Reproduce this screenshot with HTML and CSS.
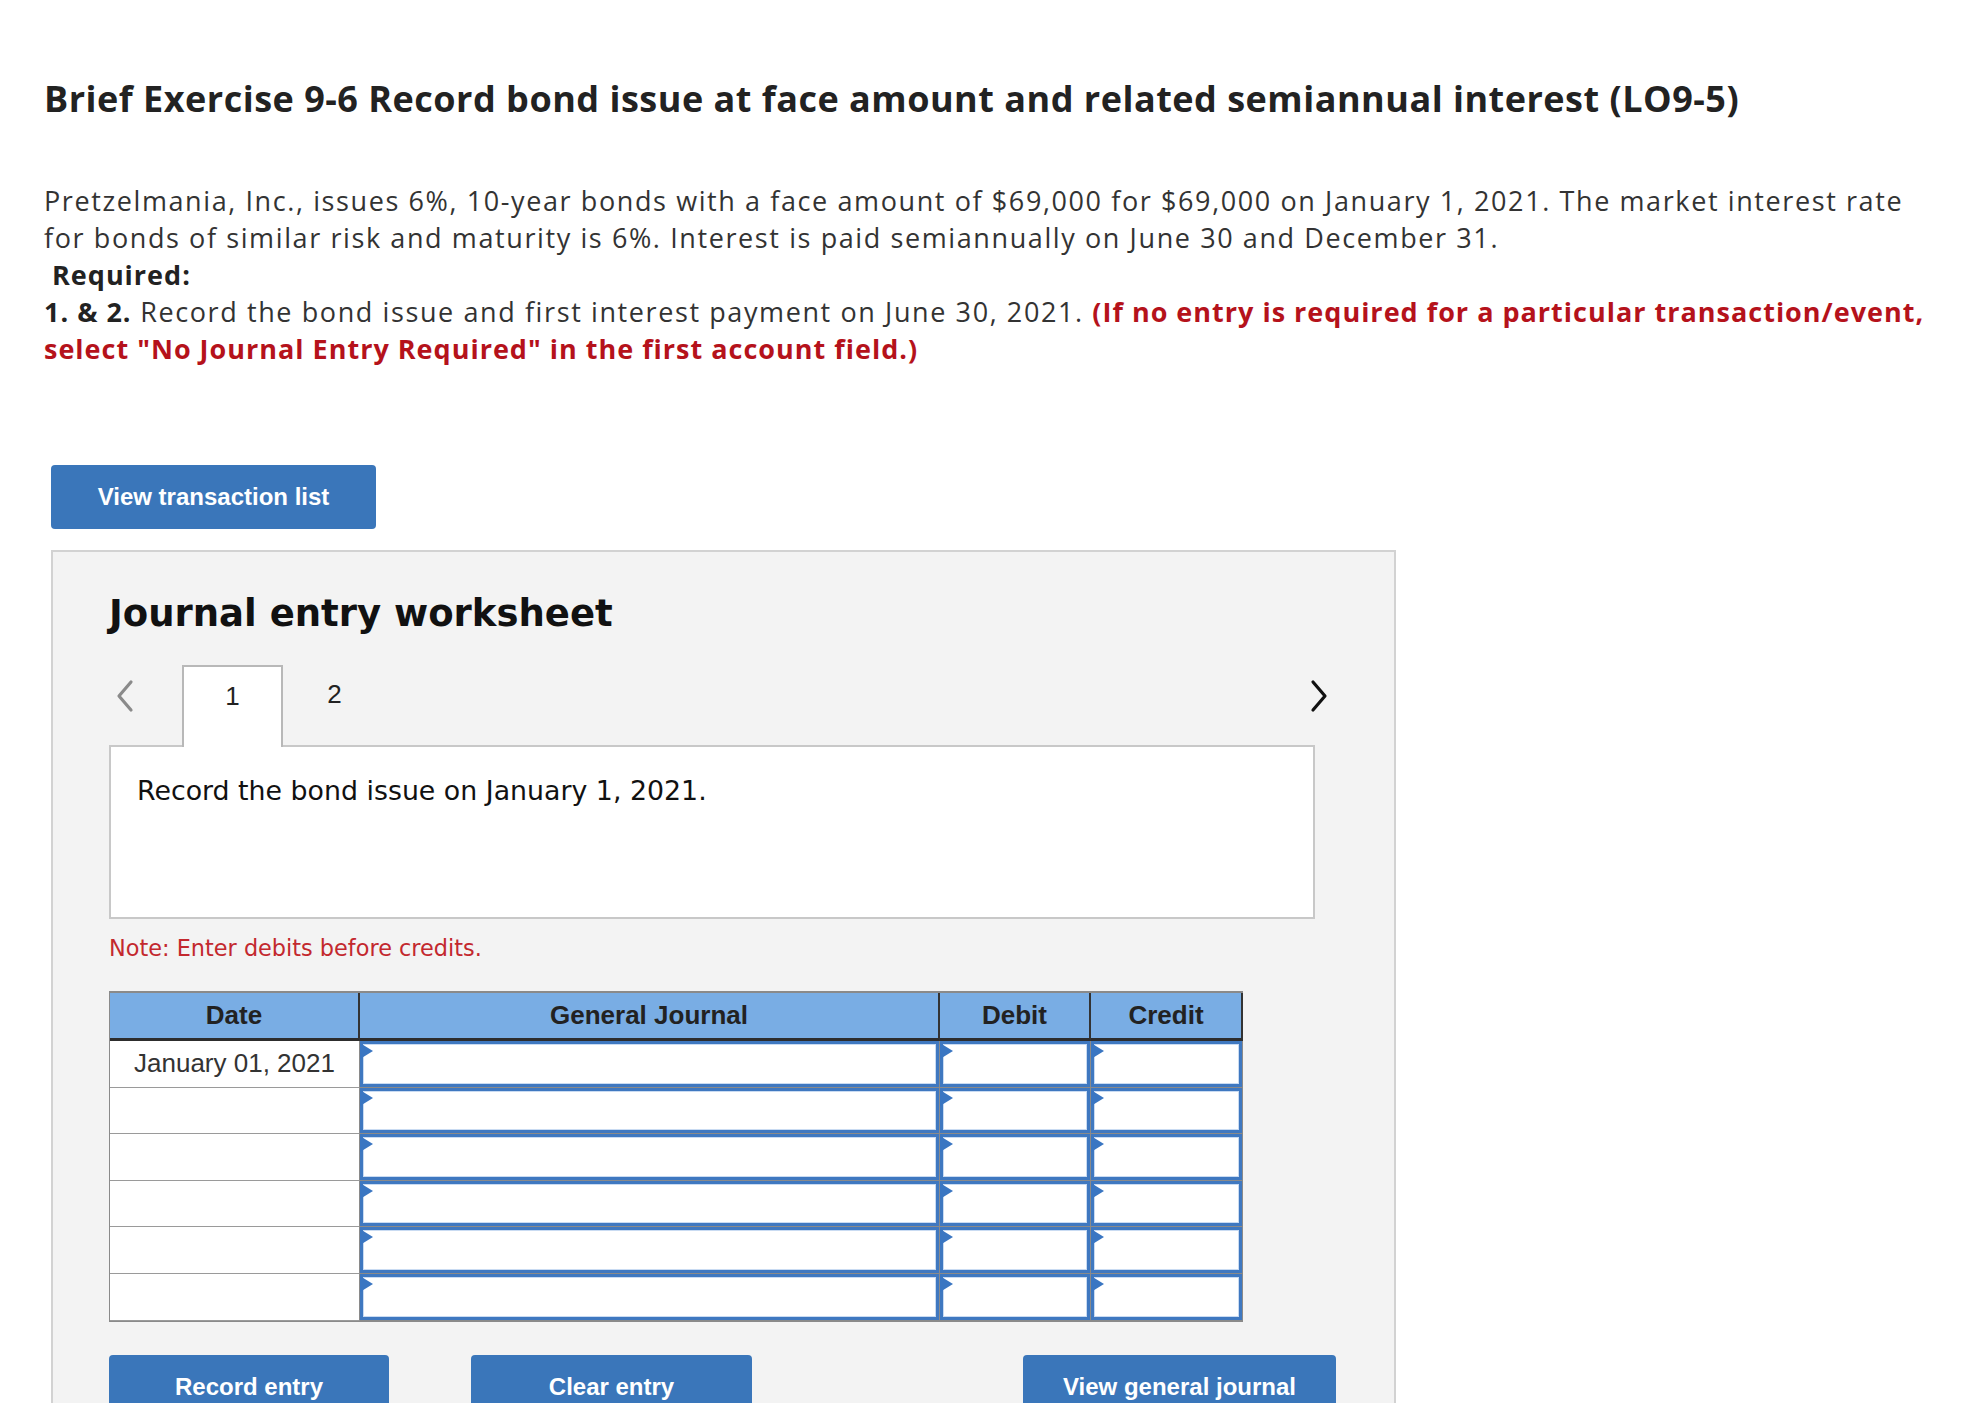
FILE: index.html
```html
<!DOCTYPE html>
<html lang="en">
<head>
<meta charset="utf-8">
<title>Brief Exercise 9-6</title>
<link rel="stylesheet" href="styles.css">
</head>
<body>
<div class="page">
  <h1 class="title">Brief Exercise 9-6 Record bond issue at face amount and related semiannual interest (LO9-5)</h1>
  <p class="intro">Pretzelmania, Inc., issues 6%, 10-year bonds with a face amount of $69,000 for $69,000 on January 1, 2021. The market interest rate<br>for bonds of similar risk and maturity is 6%. Interest is paid semiannually on June 30 and December 31.<br><span class="req">&nbsp;Required:</span><br><b>1. &amp; 2.</b> Record the bond issue and first interest payment on June 30, 2021. <span class="warn">(If no entry is required for a particular transaction/event,<br>select "No Journal Entry Required" in the first account field.)</span></p>

  <button class="btn btn-list" type="button">View transaction list</button>

  <section class="panel">
    <h2 class="panel-title">Journal entry worksheet</h2>
    <div class="nav">
      <span class="arrow arrow-prev">
        <svg width="22" height="34" viewBox="0 0 22 34"><path d="M17 3 L5 17 L17 31" fill="none" stroke="#8a8a8a" stroke-width="3.2" stroke-linecap="round" stroke-linejoin="round"/></svg>
      </span>
      <div class="tabs">
        <span class="tab tab-active">1</span>
        <span class="tab">2</span>
      </div>
      <span class="arrow arrow-next">
        <svg width="22" height="34" viewBox="0 0 22 34"><path d="M5 3 L17 17 L5 31" fill="none" stroke="#111" stroke-width="3.2" stroke-linecap="round" stroke-linejoin="round"/></svg>
      </span>
    </div>
    <div class="prompt">Record the bond issue on January 1, 2021.</div>
    <p class="note">Note: Enter debits before credits.</p>

    <div class="journal">
      <div class="hcell">Date</div>
      <div class="hcell">General Journal</div>
      <div class="hcell">Debit</div>
      <div class="hcell">Credit</div>

      <div class="dcell">January 01, 2021</div>
      <div class="icell"><span class="field"></span></div>
      <div class="icell"><span class="field"></span></div>
      <div class="icell"><span class="field"></span></div>

      <div class="dcell"></div>
      <div class="icell"><span class="field"></span></div>
      <div class="icell"><span class="field"></span></div>
      <div class="icell"><span class="field"></span></div>

      <div class="dcell"></div>
      <div class="icell"><span class="field"></span></div>
      <div class="icell"><span class="field"></span></div>
      <div class="icell"><span class="field"></span></div>

      <div class="dcell"></div>
      <div class="icell"><span class="field"></span></div>
      <div class="icell"><span class="field"></span></div>
      <div class="icell"><span class="field"></span></div>

      <div class="dcell"></div>
      <div class="icell"><span class="field"></span></div>
      <div class="icell"><span class="field"></span></div>
      <div class="icell"><span class="field"></span></div>

      <div class="dcell"></div>
      <div class="icell"><span class="field"></span></div>
      <div class="icell"><span class="field"></span></div>
      <div class="icell"><span class="field"></span></div>
    </div>

    <div class="actions">
      <button class="btn btn-record" type="button">Record entry</button>
      <button class="btn btn-clear" type="button">Clear entry</button>
      <button class="btn btn-view" type="button">View general journal</button>
    </div>
  </section>
</div>
</body>
</html>
```
FILE: styles.css
```css
html, body {
  margin: 0;
  padding: 0;
  background: #ffffff;
}
body {
  font-family: "Open Sans", "Liberation Sans", sans-serif;
  color: #333333;
  overflow: hidden;
}
.page {
  padding: 0 0 0 44px;
}
.title {
  margin: 0;
  padding-top: 77px;
  font-family: "Open Sans", sans-serif;
  font-weight: 700;
  font-size: 36px;
  line-height: 44px;
  letter-spacing: 0.5px;
  color: #222222;
  white-space: nowrap;
}
.intro {
  margin: 61px 0 0 0;
  font-family: "Open Sans", sans-serif;
  font-size: 27px;
  line-height: 37px;
  letter-spacing: 1.6px;
  color: #333333;
  white-space: nowrap;
}
.intro b, .req {
  font-weight: 700;
  letter-spacing: 1px;
  color: #222222;
}
.warn {
  font-weight: 700;
  letter-spacing: 1px;
  color: #b5121b;
}
.btn {
  display: block;
  border: none;
  border-radius: 4px;
  background: #3a76ba;
  color: #ffffff;
  font-family: "Liberation Sans", Arial, sans-serif;
  font-weight: 700;
  font-size: 24px;
  padding: 0;
  cursor: pointer;
}
.btn-list {
  margin: 98px 0 0 7px;
  width: 325px;
  height: 64px;
}
.panel {
  margin: 21px 0 0 7px;
  width: 1345px;
  height: 900px;
  box-sizing: border-box;
  background: #f3f3f3;
  border: 2px solid #d2d2d2;
  padding: 42px 0 0 56px;
}
.panel-title {
  margin: 0;
  font-family: "DejaVu Sans", Verdana, sans-serif;
  font-weight: 700;
  font-size: 37px;
  line-height: 40px;
  color: #111111;
}
.nav {
  margin-top: 31px;
  display: flex;
  align-items: flex-start;
  width: 1221px;
  height: 80px;
}
.arrow {
  display: flex;
  align-items: center;
  height: 62px;
}
.arrow-prev {
  width: 73px;
  padding-left: 5px;
  box-sizing: border-box;
}
.arrow-next {
  margin-left: auto;
}
.tabs {
  display: flex;
  height: 80px;
}
.tab {
  width: 103px;
  height: 80px;
  box-sizing: border-box;
  display: flex;
  justify-content: center;
  padding-top: 14px;
  font-family: "Liberation Sans", Arial, sans-serif;
  font-size: 26px;
  color: #222222;
}
.tab-active {
  width: 101px;
  height: 82px;
  background: #ffffff;
  border: 2px solid #b8b8b8;
  border-bottom: none;
  position: relative;
  z-index: 1;
}
.prompt {
  width: 1206px;
  height: 174px;
  box-sizing: border-box;
  background: #ffffff;
  border: 2px solid #c8c8c8;
  padding: 29px 0 0 26px;
  font-family: "DejaVu Sans", Verdana, sans-serif;
  font-size: 26.8px;
  line-height: 30px;
  color: #111111;
}
.note {
  margin: 17px 0 0 0;
  font-family: "DejaVu Sans", Verdana, sans-serif;
  font-size: 22.4px;
  line-height: 24px;
  color: #c3282e;
}
.journal {
  margin-top: 31px;
  display: grid;
  grid-template-columns: 250px 580px 151px 152px;
  grid-template-rows: 48px;
  grid-auto-rows: 46.6px;
  width: 1133px;
  border-top: 2px solid #8a8a8a;
  border-left: 1px solid #8a8a8a;
  border-bottom: 1px solid #8a8a8a;
}
.hcell {
  background: #79ade4;
  border-right: 2px solid #333333;
  border-bottom: 3px solid #2d2d2d;
  display: flex;
  align-items: center;
  justify-content: center;
  font-family: "Liberation Sans", Arial, sans-serif;
  font-weight: 700;
  font-size: 26px;
  color: #222222;
}
.dcell {
  background: #ffffff;
  border-right: 1px solid #8a8a8a;
  border-bottom: 1px solid #9a9a9a;
  display: flex;
  align-items: center;
  justify-content: center;
  font-family: "Liberation Sans", Arial, sans-serif;
  font-size: 26px;
  color: #333333;
}
.icell {
  border-right: 1px solid #8a8a8a;
  border-bottom: 1px solid #8a8a8a;
  background: #d7d7d7;
  display: flex;
}
.field {
  flex: 1;
  position: relative;
  background: #ffffff;
  border: 3px solid #3f78c0;
  box-shadow: inset 0 0 0 1px #c9dbf2;
}
.field::before {
  content: "";
  position: absolute;
  left: -3px;
  top: -1px;
  width: 0;
  height: 0;
  border-top: 8px solid transparent;
  border-bottom: 8px solid transparent;
  border-left: 13px solid #3a76c2;
}
.actions {
  margin-top: 33px;
  display: flex;
}
.actions .btn {
  height: 64px;
}
.btn-record {
  width: 280px;
}
.btn-clear {
  width: 281px;
  margin-left: 82px;
}
.btn-view {
  width: 313px;
  margin-left: 271px;
}
```
